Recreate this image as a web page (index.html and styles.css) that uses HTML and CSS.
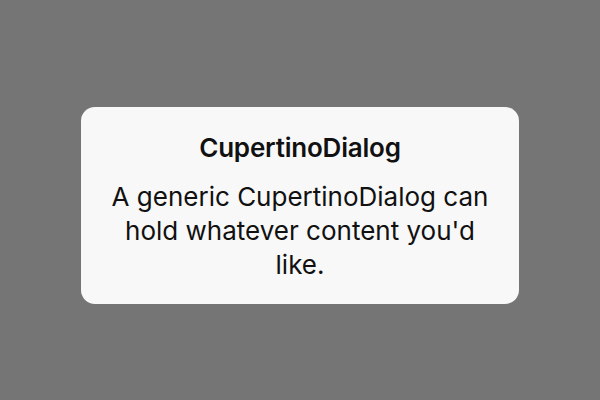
FILE: index.html
```html
<!DOCTYPE html>
<html>
<head>
<meta charset="utf-8">
<link rel="stylesheet" href="styles.css">
</head>
<body>
<div class="screen">
  <div class="dialog">
    <div class="title">CupertinoDialog</div>
    <div class="content">A generic CupertinoDialog can hold whatever content you'd like.</div>
  </div>
</div>
</body>
</html>
```
FILE: styles.css
```css
html, body {
  margin: 0;
  padding: 0;
}
.screen {
  width: 600px;
  height: 400px;
  background: #757575;
  display: flex;
  align-items: center;
  justify-content: center;
  font-family: Inter, "Noto Sans", sans-serif;
}
.dialog {
  width: 438px;
  box-sizing: border-box;
  margin-top: 11px;
  background: #f8f8f8;
  border-radius: 14px;
  padding: 25px 20px 22px;
  display: flex;
  flex-direction: column;
  align-items: center;
  gap: 16px;
  text-align: center;
  color: #111;
}
.title {
  font-size: 26px;
  font-weight: 600;
  line-height: 32px;
  letter-spacing: -0.2px;
}
.content {
  font-size: 26px;
  line-height: 34px;
  font-weight: 400;
}
```
